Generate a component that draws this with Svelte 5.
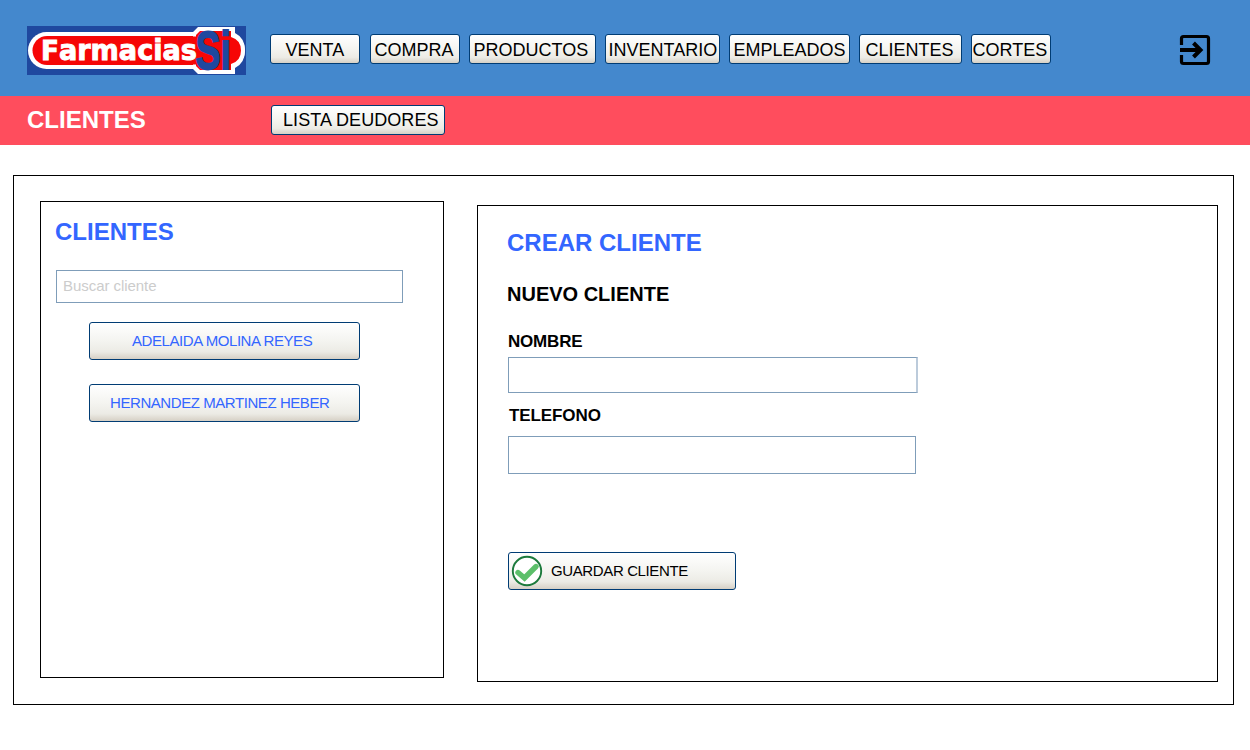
<script>
  const nav = [
    { label: 'VENTA', w: 90, pad: 14.5 },
    { label: 'COMPRA', w: 90, pad: 3.5 },
    { label: 'PRODUCTOS', w: 127, pad: 3.5 },
    { label: 'INVENTARIO', w: 115, pad: 2.5 },
    { label: 'EMPLEADOS', w: 121, pad: 3.5 },
    { label: 'CLIENTES', w: 103, pad: 5.5 },
    { label: 'CORTES', w: 80, pad: 0.5 }
  ];
  const gaps = [10, 9, 9, 9, 9, 9, 0];
  const clients = [
    { name: 'ADELAIDA MOLINA REYES', pad: 42 },
    { name: 'HERNANDEZ MARTINEZ HEBER', pad: 20 }
  ];
</script>

<header class="top">
  <svg class="logo" width="219" height="49" viewBox="0 0 219 49">
    <rect width="219" height="49" fill="#1f489f" />
    <rect x="1" y="6" width="217" height="37" rx="18.5" fill="#fff" />
    <rect x="5.500" y="10" width="208.500" height="29" rx="14.500" fill="#f60606" />
    <path d="M171 1H208V7Q218 12 218 24.500Q218 37 208 42V48H171L166 43V38H164V11H166V6Z" fill="#fff" />
    <path d="M166 10.500H169V9L173 5H204V11Q214 14 214 24.500Q214 35 204 38V44H173L169 40V38.500H164V10.500Z" fill="#f60606" />
    <text class="brand" x="14" y="33.500" textLength="156" lengthAdjust="spacingAndGlyphs"><tspan class="cap">F</tspan>armacias</text>
    <text class="mono" x="168.500" y="43" textLength="35.500" lengthAdjust="spacingAndGlyphs">Si</text>
  </svg>
  <nav>
    {#each nav as item, i}
      <button class="btn small" style="width:{item.w}px;padding-left:{item.pad}px;margin-right:{gaps[i]}px">{item.label}</button>
    {/each}
  </nav>
  <svg class="exit" width="32" height="32" viewBox="0 0 32 32">
    <path d="M2.500 11V4.500Q2.500 2.500 4.500 2.500H27.500Q29.500 2.500 29.500 4.500V27.500Q29.500 29.500 27.500 29.500H4.500Q2.500 29.500 2.500 27.500V21" />
    <path d="M1 16H21M14.500 9L21.500 16L14.500 23" stroke-width="4" />
  </svg>
</header>

<div class="sub">
  <h1>CLIENTES</h1>
  <button class="btn small list">LISTA DEUDORES</button>
</div>

<main>
  <section class="clients">
    <h2>CLIENTES</h2>
    <input class="search" placeholder="Buscar cliente" />
    {#each clients as c}
      <button class="btn client" style="padding-left:{c.pad}px">{c.name}</button>
    {/each}
  </section>
  <section class="create">
    <h2>CREAR CLIENTE</h2>
    <h3>NUEVO CLIENTE</h3>
    <label class="name" for="n">NOMBRE</label>
    <input id="n" class="in-name" />
    <label class="tel" for="t">TELEFONO</label>
    <input id="t" class="in-tel" />
    <button class="btn save">
      <svg width="32" height="32" viewBox="0 0 32 32">
        <circle cx="16" cy="16" r="14.200" fill="#fff" stroke="#1c7a3c" stroke-width="1.900" />
        <path d="M7 17.500L13.500 23L25 11.500" fill="none" stroke="#5cbf6a" stroke-width="5.400" stroke-linecap="round" />
      </svg>
      <span>GUARDAR CLIENTE</span>
    </button>
  </section>
</main>

<style>
  :global(body) { margin: 0; background: #fff; font-family: 'Liberation Sans', Arial, sans-serif; }
  * { box-sizing: border-box; }
  h1, h2, h3 { margin: 0; font-weight: 700; }
  .top { height: 96px; background: #4488cd; display: flex; align-items: flex-start; padding: 26px 39px 0 27px; }
  .logo { flex: none; display: block; }
  .brand { font: 700 28px 'DejaVu Sans', 'Liberation Sans', sans-serif; fill: #fff; stroke: #fff; stroke-width: 0.900; }
  .cap { font-size: 27px; }
  .mono { font: 700 53px 'Liberation Sans', sans-serif; fill: #1f489f; stroke: #1f489f; stroke-width: 1.800; }
  nav { display: flex; margin: 8px 0 0 24px; }
  .btn {
    font-family: inherit; border: 1px solid #003c74; border-radius: 3px; padding: 0; text-align: left;
    background: linear-gradient(#fff 0%, #f4f4f0 50%, #ecebe5 80%, #d6d0c5 100%);
    white-space: nowrap; color: #000; display: block; flex: none;
  }
  .small { height: 30px; font-size: 18px; line-height: 28px; }
  nav .small { padding-top: 2px; line-height: 26px; }
  .exit { margin: 8px 0 0 auto; fill: none; stroke: #000; stroke-width: 3.200; display: block; }
  .sub { height: 49px; background: #ff4d5d; display: flex; padding-left: 27px; }
  h1 { width: 244px; font-size: 24px; line-height: 28px; color: #fff; padding-top: 10px; }
  .list { width: 174px; margin-top: 9px; padding-left: 11px; letter-spacing: 0.060px; }
  main { margin: 30px 0 0 13px; width: 1221px; height: 530px; border: 1px solid #000; display: flex; align-items: flex-start; gap: 33px; padding: 25px 0 0 26px; }
  section { border: 1px solid #000; height: 477px; display: flex; flex-direction: column; align-items: flex-start; }
  .clients { width: 404px; padding: 16px 0 0 14px; }
  .create { width: 741px; margin-top: 4px; padding: 23px 0 0 29px; }
  h2 { font-size: 24px; line-height: 28px; color: #36f; }
  h3 { font-size: 20px; line-height: 24px; margin-top: 25px; }
  input { display: block; border: 1px solid #7f9db9; background: #fff; font: 15px 'Liberation Sans', Arial, sans-serif; outline: 0; margin: 0; }
  .search { width: 347px; height: 33px; margin: 24px 0 0 1px; padding: 0 6px 2px; letter-spacing: -0.050px; }
  .search::placeholder { color: #ccc; opacity: 1; }
  .client { width: 271px; height: 38px; margin: 19px 0 0 34px; font-size: 15px; line-height: 36px; color: #36f; letter-spacing: -0.430px; }
  .client + .client { margin-top: 24px; }
  label { font-size: 17px; font-weight: 700; line-height: 20px; }
  .name { margin: 26px 0 0 1px; letter-spacing: -0.200px; }
  .tel { margin: 13px 0 0 2px; letter-spacing: -0.100px; }
  .in-name { width: 409px; height: 36px; margin: 5px 0 0 1px; border-right: 2px solid #bccbdb; width: 410px; }
  .in-tel { width: 408px; height: 38px; margin: 10px 0 0 1px; }
  .save { width: 228px; height: 38px; margin: 78px 0 0 1px; display: flex; align-items: center; padding-left: 2px; gap: 8px; font-size: 15px; letter-spacing: -0.380px; }
  .save span { padding-bottom: 2px; }
</style>
